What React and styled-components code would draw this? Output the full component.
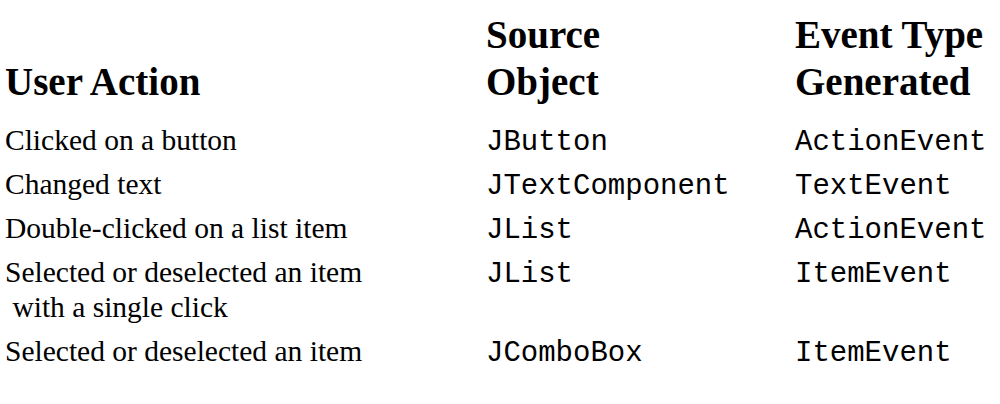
import React from "react";
import styled, { createGlobalStyle } from "styled-components";

const GlobalStyle = createGlobalStyle`
  html, body {
    margin: 0;
    padding: 0;
    background: #ffffff;
  }
`;

const Table = styled.div`
  display: grid;
  grid-template-columns: 481px 309px 1fr;
  row-gap: 9px;
  padding: 11px 0 0 5px;
  color: #000000;
  font-family: "Liberation Serif", "Times New Roman", serif;
`;

const HeadCell = styled.div`
  align-self: end;
  font-size: 39px;
  font-weight: bold;
  line-height: 47px;
  margin-bottom: 9px;
`;

// mono glyphs sit a bit lower once baselines line up, so trim their box
const Cell = styled.div`
  align-self: baseline;
  font-size: ${(props) => (props.mono ? "29px" : "29.5px")};
  line-height: 35px;
  white-space: pre;
  margin-bottom: ${(props) => (props.mono ? "-2px" : "0")};
  font-family: ${(props) =>
    props.mono
      ? `"Liberation Mono", "Courier New", monospace`
      : `"Liberation Serif", "Times New Roman", serif`};
`;

const rows = [
  { action: "Clicked on a button", source: "JButton", event: "ActionEvent" },
  { action: "Changed text", source: "JTextComponent", event: "TextEvent" },
  { action: "Double-clicked on a list item", source: "JList", event: "ActionEvent" },
  {
    action: "Selected or deselected an item\n with a single click",
    source: "JList",
    event: "ItemEvent",
  },
  { action: "Selected or deselected an item", source: "JComboBox", event: "ItemEvent" },
];

const App = () => (
  <>
    <GlobalStyle />
    <Table>
      <HeadCell>User Action</HeadCell>
      <HeadCell>
        Source
        <br />
        Object
      </HeadCell>
      <HeadCell>
        Event Type
        <br />
        Generated
      </HeadCell>
      {rows.map((row, index) => (
        <React.Fragment key={`row-${index}`}>
          <Cell>{row.action}</Cell>
          <Cell mono>{row.source}</Cell>
          <Cell mono>{row.event}</Cell>
        </React.Fragment>
      ))}
    </Table>
  </>
);

export default App;
